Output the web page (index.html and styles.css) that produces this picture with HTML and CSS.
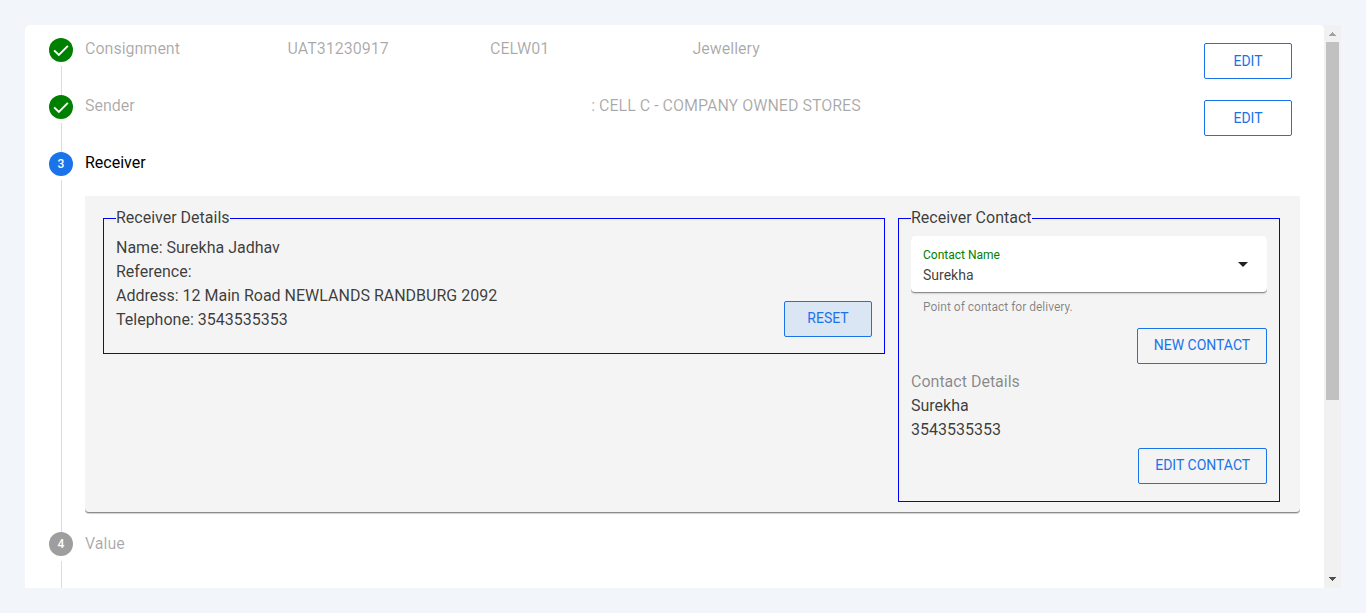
FILE: index.html
```html
<!DOCTYPE html>
<html lang="en">
<head>
<meta charset="utf-8">
<title>Consignment</title>
<link rel="stylesheet" href="styles.css">
</head>
<body>
<div class="frame">
  <main class="stepper">
    <section class="step">
      <div class="rail"><span class="dot done"><svg width="16" height="16" viewBox="0 0 24 24"><path d="M1.7 12.6 8.8 19.4 22.3 5.9" fill="none" stroke="#fff" stroke-width="2.9"/></svg></span><span class="line"></span></div>
      <div class="head">
        <span class="c2">Consignment</span><span class="c2">UAT31230917</span><span class="c2">CELW01</span><span class="c2">Jewellery</span>
        <button class="btn">EDIT</button>
      </div>
    </section>
    <section class="step">
      <div class="rail"><span class="dot done"><svg width="16" height="16" viewBox="0 0 24 24"><path d="M1.7 12.6 8.8 19.4 22.3 5.9" fill="none" stroke="#fff" stroke-width="2.9"/></svg></span><span class="line"></span></div>
      <div class="head">
        <span class="c5">Sender</span><span class="c5">: CELL C - COMPANY OWNED STORES</span>
        <button class="btn">EDIT</button>
      </div>
    </section>
    <section class="step current">
      <div class="rail"><span class="dot active">3</span><span class="line"></span></div>
      <div class="content">
        <div class="title">Receiver</div>
        <div class="card">
          <fieldset class="details">
            <legend>Receiver Details</legend>
            <div class="split">
              <div>
                <div>Name: Surekha Jadhav</div>
                <div>Reference:</div>
                <div>Address: 12 Main Road NEWLANDS RANDBURG 2092</div>
                <div>Telephone: 3543535353</div>
              </div>
              <button class="btn reset">RESET</button>
            </div>
          </fieldset>
          <fieldset class="contact">
            <legend>Receiver Contact</legend>
            <div class="select">
              <div><div class="label">Contact Name</div><div class="value">Surekha</div></div>
              <svg width="10" height="5" viewBox="0 0 10 5"><path d="M0 0h10L5 5z" fill="#212121"/></svg>
            </div>
            <div class="hint">Point of contact for delivery.</div>
            <div class="actions"><button class="btn">NEW CONTACT</button></div>
            <div class="sub">Contact Details</div>
            <div>Surekha</div>
            <div>3543535353</div>
            <div class="actions last"><button class="btn">EDIT CONTACT</button></div>
          </fieldset>
        </div>
      </div>
    </section>
    <section class="step next">
      <div class="rail"><span class="dot idle">4</span><span class="line"></span></div>
      <div class="head"><span class="c2">Value</span></div>
    </section>
  </main>
  <div class="scrollbar">
    <svg width="17" height="17" viewBox="0 0 17 17" shape-rendering="crispEdges"><path d="M8 7h1v1h1v1h1v1h1v1H5v-1h1V9h1V8h1z" fill="#a3a3a3"/></svg>
    <div class="thumb"></div>
    <svg width="17" height="17" viewBox="0 0 17 17" shape-rendering="crispEdges"><path d="M5 6h7v1h-1v1h-1v1H9v1H8V9H7V8H6V7H5z" fill="#505050"/></svg>
  </div>
</div>
</body>
</html>
```

FILE: styles.css
```css
* { box-sizing: border-box; }
body {
  margin: 0;
  padding: 25px;
  height: 613px;
  overflow: hidden;
  background: #f2f6fa;
  color: rgba(0, 0, 0, .77);
  font: 400 16px/24px Roboto, sans-serif;
}
.frame { display: flex; height: 563px; }
.stepper {
  flex: 1;
  min-width: 0;
  overflow: hidden;
  background: #fff;
  border-radius: 5px 5px 0 0;
  padding: 11px 24px 0;
}
.step { display: flex; gap: 12px; height: 57px; }
.step.current { height: 380px; }
.step.next { height: 60px; }
.rail {
  width: 24px;
  flex: none;
  display: flex;
  flex-direction: column;
  padding-top: 2px;
}
.dot {
  flex: none;
  height: 24px;
  border-radius: 50%;
  display: flex;
  align-items: center;
  justify-content: center;
  color: #fff;
  font-size: 12px;
  font-weight: 500;
}
.done { background: #008000; }
.active { background: #1a73e8; }
.idle { background: #9e9e9e; }
.line {
  flex: 1;
  width: 1px;
  margin: 4px 0 -2px 12px;
  background: #dcdcdc;
}
.next .line { margin-top: 5px; }
.head {
  flex: 1;
  display: flex;
  color: rgba(0, 0, 0, .34);
  padding-top: 1px;
}
.next .head { padding-top: 2px; }
.c2 { width: 16.6667%; }
.c5 { width: 41.6667%; }
.btn {
  flex: none;
  height: 36px;
  min-width: 88px;
  padding: 0 15.8px 2px;
  border: 1px solid #1a73e8;
  border-radius: 2px;
  background: transparent;
  color: #1a73e8;
  font: 400 14px/32px Roboto, sans-serif;
}
.head .btn { margin: 6px 8px 0 auto; padding-bottom: 0; }
.content { flex: 1; }
.title { padding-top: 1px; color: #000; }
.card {
  display: flex;
  align-items: flex-start;
  gap: 13px;
  height: 316px;
  margin-top: 21px;
  padding: 10px 20px 0 18px;
  background: #f4f4f4;
  border-radius: 0 0 4px 4px;
  box-shadow: 0 1px 0 rgba(0, 0, 0, .33), 0 2px 1px rgba(0, 0, 0, .18);
  clip-path: inset(0 0 -4px 0);
}
fieldset {
  min-width: 0;
  margin: 0;
  padding: 0 12px;
  border: 1px solid #0000ff;
}
legend { padding: 0; height: 24px; }
.details { width: 782px; height: 148px; }
.contact { width: 382px; height: 296px; }
fieldset > legend { margin-bottom: 6px; }
.split { display: flex; justify-content: space-between; }
.reset { margin-top: 65px; background: #dae6f3; }
.select {
  display: flex;
  align-items: center;
  justify-content: space-between;
  height: 56px;
  padding: 0 19px 0 12px;
  background: #fff;
  border-radius: 4px;
  box-shadow: 0 1px 1px rgba(0, 0, 0, .4), 0 2px 2px rgba(0, 0, 0, .1);
  clip-path: inset(0 0 -4px 0);
}
.label { margin-top: 1px; color: #008000; font-size: 12px; line-height: 20px; }
.value { font-size: 14px; line-height: 20px; }
.hint { padding-left: 12px; height: 36px; line-height: 30px; font-size: 12px; color: rgba(0, 0, 0, .47); }
.actions { display: flex; justify-content: flex-end; height: 42px; }
.last { padding-top: 6px; }
.sub { color: rgba(0, 0, 0, .46); }
.scrollbar {
  width: 17px;
  display: flex;
  flex-direction: column;
  background: #f1f1f1;
}
.thumb { height: 358px; margin: 0 2px auto; background: #c1c1c1; }
```
